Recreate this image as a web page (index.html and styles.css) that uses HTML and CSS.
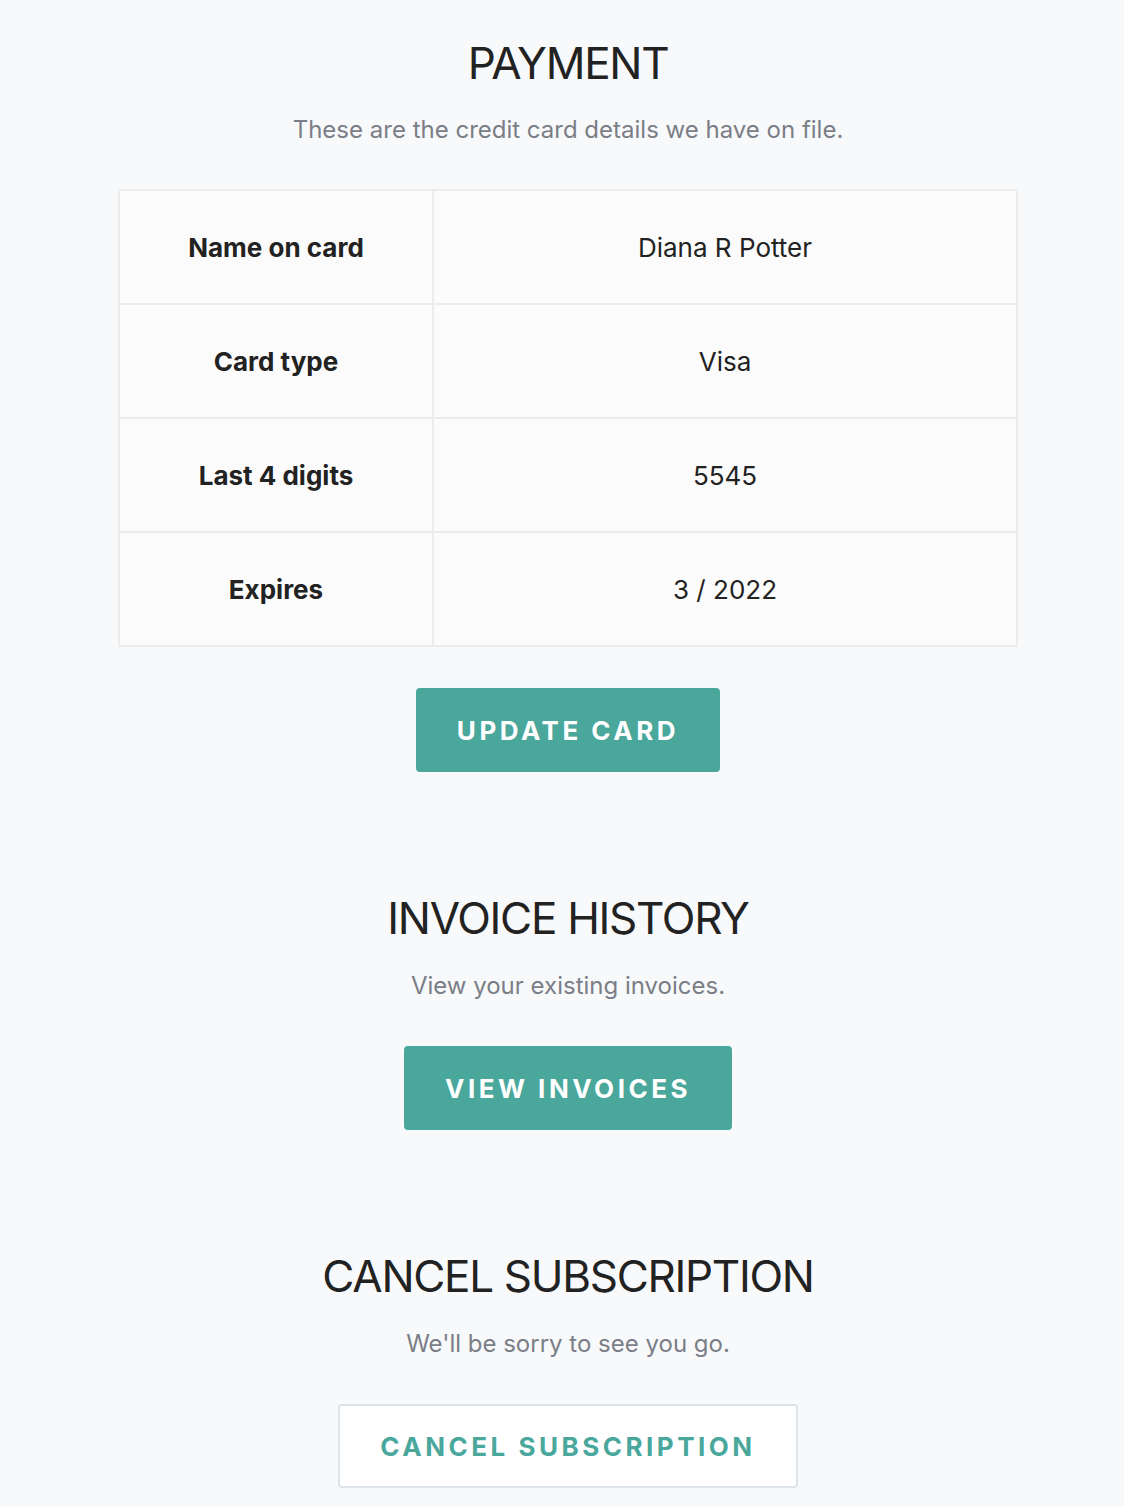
FILE: index.html
```html
<!DOCTYPE html>
<html lang="en">

<head>
  <meta charset="UTF-8" />
  <meta name="viewport" content="width=device-width, initial-scale=1.0" />
  <title>Billing</title>
  <link rel="stylesheet" href="styles.css">
</head>

<body>

  <!-- Pagamento -->
  <section class="section section-first">
    <h1>PAYMENT</h1>
    <p class="subtitle">These are the credit card details we have on file.</p>

    <table class="card-table">
      <tbody>
        <tr>
          <th>Name on card</th>
          <td>Diana R Potter</td>
        </tr>
        <tr>
          <th>Card type</th>
          <td>Visa</td>
        </tr>
        <tr>
          <th>Last 4 digits</th>
          <td>5545</td>
        </tr>
        <tr>
          <th>Expires</th>
          <td>3 / 2022</td>
        </tr>
      </tbody>
    </table>

    <a href="#" class="btn btn-update">Update card</a>
  </section>

  <!-- Faturas -->
  <section class="section">
    <h1>INVOICE HISTORY</h1>
    <p class="subtitle">View your existing invoices.</p>
    <a href="#" class="btn btn-invoices">View invoices</a>
  </section>

  <!-- Cancelamento -->
  <section class="section">
    <h1>CANCEL SUBSCRIPTION</h1>
    <p class="subtitle">We'll be sorry to see you go.</p>
    <a href="#" class="btn btn-outline">Cancel subscription</a>
  </section>

</body>

</html>
```

FILE: styles.css
```css
body {
  font-family: "Inter", "Liberation Sans", sans-serif;
  margin: 0;
  padding: 0 0 0 12px;
  background-color: #f8f9fb;
  color: #222;
}

.section {
  display: flex;
  flex-direction: column;
  align-items: center;
  margin-top: 120px;
}

.section-first {
  margin-top: 37px;
}

.section-first .subtitle {
  margin: 25px 0 43px;
}

h1 {
  margin: 0;
  font-size: 44px;
  line-height: 52px;
  font-weight: 400;
  letter-spacing: -1.3px;
  color: #222;
}

.subtitle {
  margin: 26px 0 44px;
  font-size: 24px;
  line-height: 32px;
  color: #7b7e86;
}

.card-table {
  width: 900px;
  border-collapse: collapse;
  border: 2px solid #ececec;
  background-color: #fbfbfb;
  margin-bottom: 41px;
}

.card-table th,
.card-table td {
  height: 112px;
  padding: 0;
  text-align: center;
  border: 2px solid #ececec;
  font-size: 26px;
}

.card-table th {
  width: 312px;
  font-weight: 700;
}

.card-table td {
  font-weight: 400;
}

.btn {
  display: flex;
  align-items: center;
  justify-content: center;
  box-sizing: border-box;
  height: 84px;
  border-radius: 4px;
  background-color: #4aa79c;
  color: white;
  text-decoration: none;
  text-transform: uppercase;
  font-size: 26px;
  font-weight: 700;
  letter-spacing: 3.5px;
}

.btn-update {
  width: 304px;
}

.btn-invoices {
  width: 328px;
}

.btn-outline {
  width: 460px;
  background-color: white;
  border: 2px solid #dde3e8;
  color: #4aa79c;
}
```
